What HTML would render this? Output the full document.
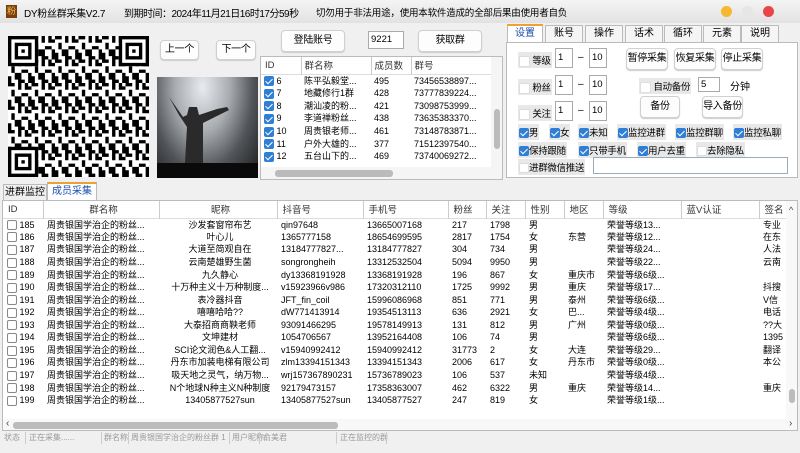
<!DOCTYPE html>
<html><head><meta charset="utf-8"><style>
*{box-sizing:border-box;margin:0;padding:0}
body{width:800px;height:453px;overflow:hidden;background:#f0f0f0;font-family:"Liberation Sans","Noto Sans CJK SC",sans-serif;font-size:11px;color:#000;position:relative}
.abs{position:absolute;white-space:nowrap}
.btn{position:absolute;background:#fdfdfd;border:1px solid #d0d0d0;border-radius:4px;text-align:center;font-size:10px;white-space:nowrap;letter-spacing:-0.3px;box-shadow:0 1px 1px #ccc}
.inp{position:absolute;background:#fff;border:1px solid #aaa;font-size:9.5px;padding-left:2px}
.cb{display:inline-block;width:10px;height:10px;border:1px solid #888;border-radius:2px;background:#fff;vertical-align:middle}
.ck{display:inline-block;width:10px;height:10px;border-radius:2px;background:#2f7fd6;vertical-align:middle;position:relative}
.ck:after{content:"";position:absolute;left:3px;top:1px;width:3px;height:6px;border:solid #fff;border-width:0 1.5px 1.5px 0;transform:rotate(45deg)}
.lbl{position:absolute;font-size:9.5px;background:#e8e8e8;padding:1px 1px;white-space:nowrap;letter-spacing:-0.3px}
table{border-collapse:collapse;table-layout:fixed}
td,th{white-space:nowrap;overflow:hidden;font-weight:normal;text-align:left}
#mt td{height:12.57px;font-size:9px;line-height:12px;padding-left:4px}
#mt th{height:17px;font-size:9.5px;color:#333;border-left:1px solid #ccc;padding-left:5px}
#gt td{height:12.7px;font-size:9px;line-height:12px;padding-left:3px}
.tab{position:absolute;top:25px;height:17px;border:1px solid #bbb;border-bottom:none;background:#f5f5f5;text-align:center;font-size:10px;line-height:16px}
</style></head><body>
<div class="abs" style="left:0;top:0;width:800px;height:23px;background:linear-gradient(#f4f4f4,#e2e2e2)"></div>
<div class="abs" style="left:6px;top:5px;width:11px;height:13px;background:#7a3d10;color:#f4c04a;font-size:9px;text-align:center;line-height:13px">粉</div>
<div class="abs" style="left:24px;top:5px;font-size:10px;letter-spacing:-0.3px">DY粉丝群采集V2.7</div>
<div class="abs" style="left:124px;top:5px;font-size:10px;letter-spacing:-0.5px">到期时间：2024年11月21日16时17分59秒</div>
<div class="abs" style="left:316px;top:5px;font-size:9.5px;letter-spacing:-0.2px">切勿用于非法用途，使用本软件造成的全部后果由使用者自负</div>
<div class="abs" style="left:721px;top:6px;width:11px;height:11px;border-radius:50%;background:#f7b731"></div>
<div class="abs" style="left:742px;top:6px;width:11px;height:11px;border-radius:50%;background:#e6e6e6"></div>
<div class="abs" style="left:763px;top:6px;width:11px;height:11px;border-radius:50%;background:#e8454a"></div>

<svg class="abs" style="left:8px;top:36px" width="141" height="141" viewBox="0 0 42 42">
<defs><pattern id="q" width="7" height="7" patternUnits="userSpaceOnUse">
<rect width="7" height="7" fill="#fff"/>
<path d="M0 0h2v1H0zM3 0h1v2H3zM5 1h2v1H5zM1 2h1v2H1zM4 3h2v1H4zM0 5h1v2H0zM2 4h2v2H2zM6 4h1v3H6zM3 6h2v1H3zM5 0h1v1H5z" fill="#000"/></pattern></defs>
<rect width="42" height="42" fill="url(#q)"/>
<g fill="#000"><rect x="0" y="0" width="9" height="9"/><rect x="33" y="0" width="9" height="9"/><rect x="0" y="33" width="9" height="9"/></g>
<g fill="#fff"><rect x="1" y="1" width="7" height="7"/><rect x="34" y="1" width="7" height="7"/><rect x="1" y="34" width="7" height="7"/></g>
<g fill="#000"><rect x="2" y="2" width="5" height="5"/><rect x="35" y="2" width="5" height="5"/><rect x="2" y="35" width="5" height="5"/></g>
<g fill="#fff"><rect x="3" y="3" width="3" height="3"/><rect x="36" y="3" width="3" height="3"/><rect x="3" y="36" width="3" height="3"/></g>
<g fill="#000"><rect x="4" y="4" width="1" height="1"/><rect x="37" y="4" width="1" height="1"/><rect x="4" y="37" width="1" height="1"/></g>
</svg>
<div class="btn" style="left:160px;top:40px;width:39px;height:20px;line-height:18px">上一个</div>
<div class="btn" style="left:216px;top:40px;width:40px;height:20px;line-height:18px">下一个</div>
<div class="abs" style="left:157px;top:77px;width:101px;height:101px;background:radial-gradient(ellipse at 45% 10%,#e8ecf0 0%,#a8acb0 35%,#505458 65%,#1a1a1a 100%)"></div>
<div class="abs" style="left:157px;top:163px;width:101px;height:15px;background:#0a0a0a"></div>
<svg class="abs" style="left:157px;top:77px" width="101" height="101"><path d="M12 20 L26 40 L30 38 L32 30 L40 30 L42 38 L60 32 L70 30 L72 33 L58 40 L46 46 L46 86 L28 86 L30 50 L22 38 Z" fill="#2a2a2a"/></svg>

<div class="btn" style="left:281px;top:30px;width:64px;height:22px;line-height:20px">登陆账号</div>
<div class="inp" style="left:368px;top:31px;width:36px;height:18px;line-height:16px">9221</div>
<div class="btn" style="left:418px;top:30px;width:64px;height:22px;line-height:20px">获取群</div>

<div class="abs" style="left:260px;top:56px;width:243px;height:124px;background:#fff;border:1px solid #bbb;overflow:hidden">
<table id="gt" style="width:230px">
<colgroup><col style="width:40px"><col style="width:70px"><col style="width:40px"><col style="width:80px"></colgroup>
<tr style="height:17px;font-size:9.5px;color:#333;border-bottom:1px solid #ddd"><th style="padding-left:4px">ID</th><th style="border-left:1px solid #ccc;padding-left:3px">群名称</th><th style="border-left:1px solid #ccc;padding-left:3px">成员数</th><th style="border-left:1px solid #ccc;padding-left:3px">群号</th></tr>
<tr><td><span class="ck"></span> 6</td><td>陈平弘毅堂...</td><td>495</td><td>73456538897...</td></tr>
<tr><td><span class="ck"></span> 7</td><td>地藏修行1群</td><td>428</td><td>73777839224...</td></tr>
<tr><td><span class="ck"></span> 8</td><td>潮汕凌的粉...</td><td>421</td><td>73098753999...</td></tr>
<tr><td><span class="ck"></span> 9</td><td>李道禅粉丝...</td><td>438</td><td>73635383370...</td></tr>
<tr><td><span class="ck"></span> 10</td><td>周贵银老师...</td><td>461</td><td>73148783871...</td></tr>
<tr><td><span class="ck"></span> 11</td><td>户外大雄的...</td><td>377</td><td>71512397540...</td></tr>
<tr><td><span class="ck"></span> 12</td><td>五台山下的...</td><td>469</td><td>73740069272...</td></tr>
</table>
<div class="abs" style="left:230px;top:0;width:12px;height:110px;background:#f5f5f5"></div>
<div class="abs" style="left:233px;top:52px;width:6px;height:40px;background:#bbb;border-radius:3px"></div>
<div class="abs" style="left:0;top:110px;width:242px;height:13px;background:#f5f5f5"></div>
<div class="abs" style="left:14px;top:113px;width:118px;height:7px;background:#bbb;border-radius:3px"></div>
</div>

<div class="tab" style="left:507px;width:36px;background:#fff;color:#1a4fb0;border-top:2px solid #f0a030;top:24px;height:19px">设置</div>
<div class="tab" style="left:545px;width:38px">账号</div>
<div class="tab" style="left:585px;width:38px">操作</div>
<div class="tab" style="left:625px;width:38px">话术</div>
<div class="tab" style="left:664px;width:38px">循环</div>
<div class="tab" style="left:703px;width:38px">元素</div>
<div class="tab" style="left:741px;width:38px">说明</div>
<div class="abs" style="left:506px;top:42px;width:292px;height:136px;background:#fff;border:1px solid #bbb"></div>
<div class="lbl" style="left:518px;top:52px"><span class="cb" style="width:11px;height:11px;border-color:#ddd"></span> 等级</div>
<div class="inp" style="left:555px;top:48px;width:18px;height:20px;line-height:18px">1</div><div class="abs" style="left:578px;top:52px;font-size:10px">–</div>
<div class="inp" style="left:589px;top:48px;width:18px;height:20px;line-height:18px">10</div>
<div class="lbl" style="left:518px;top:79px"><span class="cb" style="width:11px;height:11px;border-color:#ddd"></span> 粉丝</div>
<div class="inp" style="left:555px;top:75px;width:18px;height:20px;line-height:18px">1</div><div class="abs" style="left:578px;top:79px;font-size:10px">–</div>
<div class="inp" style="left:589px;top:75px;width:18px;height:20px;line-height:18px">10</div>
<div class="lbl" style="left:518px;top:105px"><span class="cb" style="width:11px;height:11px;border-color:#ddd"></span> 关注</div>
<div class="inp" style="left:555px;top:101px;width:18px;height:20px;line-height:18px">1</div><div class="abs" style="left:578px;top:105px;font-size:10px">–</div>
<div class="inp" style="left:589px;top:101px;width:18px;height:20px;line-height:18px">10</div>
<div class="btn" style="left:626px;top:48px;width:42px;height:22px;line-height:20px">暂停采集</div>
<div class="btn" style="left:674px;top:48px;width:42px;height:22px;line-height:20px">恢复采集</div>
<div class="btn" style="left:721px;top:48px;width:42px;height:22px;line-height:20px">停止采集</div>
<div class="lbl" style="left:639px;top:78px"><span class="cb" style="width:11px;height:11px;border-color:#ddd"></span> 自动备份</div>
<div class="inp" style="left:698px;top:77px;width:22px;height:15px;line-height:13px">5</div>
<div class="abs" style="left:730px;top:78px;font-size:10px">分钟</div>
<div class="btn" style="left:640px;top:96px;width:40px;height:22px;line-height:20px">备份</div>
<div class="btn" style="left:702px;top:96px;width:41px;height:22px;line-height:20px">导入备份</div>
<div class="lbl" style="left:518px;top:124px"><span class="ck"></span>男</div>
<div class="lbl" style="left:549px;top:124px"><span class="ck"></span>女</div>
<div class="lbl" style="left:578px;top:124px"><span class="ck"></span>未知</div>
<div class="lbl" style="left:617px;top:124px"><span class="ck"></span>监控进群</div>
<div class="lbl" style="left:675px;top:124px"><span class="ck"></span>监控群聊</div>
<div class="lbl" style="left:733px;top:124px"><span class="ck"></span>监控私聊</div>
<div class="lbl" style="left:518px;top:142px"><span class="ck"></span>保持跟随</div>
<div class="lbl" style="left:578px;top:142px"><span class="ck"></span>只带手机</div>
<div class="lbl" style="left:637px;top:142px"><span class="ck"></span>用户去重</div>
<div class="lbl" style="left:696px;top:142px"><span class="cb" style="border-color:#ddd"></span>去除隐私</div>
<div class="lbl" style="left:518px;top:159px"><span class="cb" style="border-color:#ddd"></span>进群微信推送</div>
<div class="inp" style="left:593px;top:157px;width:195px;height:17px;border-color:#9ab"></div>

<div class="abs" style="left:3px;top:184px;width:44px;height:16px;border:1px solid #bbb;border-bottom:none;font-size:10px;text-align:center;line-height:15px">进群监控</div>
<div class="abs" style="left:47px;top:182px;width:50px;height:18px;border:1px solid #bbb;border-top:2px solid #f0a030;border-bottom:none;background:#fff;color:#1a4fb0;font-size:10px;text-align:center;line-height:15px">成员采集</div>

<div class="abs" style="left:2px;top:200px;width:796px;height:231px;background:#fff;border:1px solid #bbb;overflow:hidden">
<table id="mt" style="width:784px">
<colgroup><col style="width:40px"><col style="width:116px"><col style="width:118px"><col style="width:86px"><col style="width:85px"><col style="width:38px"><col style="width:39px"><col style="width:39px"><col style="width:39px"><col style="width:78px"><col style="width:78px"><col style="width:28px"></colgroup>
<tr style="border-bottom:1px solid #ddd"><th style="border:none">ID</th><th style="text-align:center">群名称</th><th style="text-align:center">昵称</th><th>抖音号</th><th>手机号</th><th>粉丝</th><th>关注</th><th>性别</th><th>地区</th><th>等级</th><th>蓝V认证</th><th>签名</th></tr>
<tr><td><span class="cb"></span> 185</td><td>周贵银国学治企的粉丝...</td><td style="text-align:center">沙发套窗帘布艺</td><td>qin97648</td><td>13665007168</td><td>217</td><td>1798</td><td>男</td><td></td><td>荣誉等级13...</td><td></td><td>专业</td></tr>
<tr><td><span class="cb"></span> 186</td><td>周贵银国学治企的粉丝...</td><td style="text-align:center">叶心儿</td><td>1365777158</td><td>18654699595</td><td>2817</td><td>1754</td><td>女</td><td>东营</td><td>荣誉等级12...</td><td></td><td>在东</td></tr>
<tr><td><span class="cb"></span> 187</td><td>周贵银国学治企的粉丝...</td><td style="text-align:center">大道至简观自在</td><td>13184777827...</td><td>13184777827</td><td>304</td><td>734</td><td>男</td><td></td><td>荣誉等级24...</td><td></td><td>人法</td></tr>
<tr><td><span class="cb"></span> 188</td><td>周贵银国学治企的粉丝...</td><td style="text-align:center">云南楚雄野生菌</td><td>songrongheih</td><td>13312532504</td><td>5094</td><td>9950</td><td>男</td><td></td><td>荣誉等级22...</td><td></td><td>云南</td></tr>
<tr><td><span class="cb"></span> 189</td><td>周贵银国学治企的粉丝...</td><td style="text-align:center">九久静心</td><td>dy13368191928</td><td>13368191928</td><td>196</td><td>867</td><td>女</td><td>重庆市</td><td>荣誉等级6级...</td><td></td><td></td></tr>
<tr><td><span class="cb"></span> 190</td><td>周贵银国学治企的粉丝...</td><td style="text-align:center">十万种主义十万种制度...</td><td>v15923966v986</td><td>17320312110</td><td>1725</td><td>9992</td><td>男</td><td>重庆</td><td>荣誉等级17...</td><td></td><td>抖搜</td></tr>
<tr><td><span class="cb"></span> 191</td><td>周贵银国学治企的粉丝...</td><td style="text-align:center">表冷器抖音</td><td>JFT_fin_coil</td><td>15996086968</td><td>851</td><td>771</td><td>男</td><td>泰州</td><td>荣誉等级6级...</td><td></td><td>V信</td></tr>
<tr><td><span class="cb"></span> 192</td><td>周贵银国学治企的粉丝...</td><td style="text-align:center">嘻嘻哈哈??</td><td>dW771413914</td><td>19354513113</td><td>636</td><td>2921</td><td>女</td><td>巴...</td><td>荣誉等级4级...</td><td></td><td>电话</td></tr>
<tr><td><span class="cb"></span> 193</td><td>周贵银国学治企的粉丝...</td><td style="text-align:center">大泰招商商鞅老师</td><td>93091466295</td><td>19578149913</td><td>131</td><td>812</td><td>男</td><td>广州</td><td>荣誉等级0级...</td><td></td><td>??大</td></tr>
<tr><td><span class="cb"></span> 194</td><td>周贵银国学治企的粉丝...</td><td style="text-align:center">文坤建材</td><td>1054706567</td><td>13952164408</td><td>106</td><td>74</td><td>男</td><td></td><td>荣誉等级6级...</td><td></td><td>1395</td></tr>
<tr><td><span class="cb"></span> 195</td><td>周贵银国学治企的粉丝...</td><td style="text-align:center">SCI论文润色&amp;人工翻...</td><td>v15940992412</td><td>15940992412</td><td>31773</td><td>2</td><td>女</td><td>大连</td><td>荣誉等级29...</td><td></td><td>翻译</td></tr>
<tr><td><span class="cb"></span> 196</td><td>周贵银国学治企的粉丝...</td><td style="text-align:center">丹东市加装电梯有限公司</td><td>zlm13394151343</td><td>13394151343</td><td>2006</td><td>617</td><td>女</td><td>丹东市</td><td>荣誉等级0级...</td><td></td><td>本公</td></tr>
<tr><td><span class="cb"></span> 197</td><td>周贵银国学治企的粉丝...</td><td style="text-align:center">吸天地之灵气，纳万物...</td><td>wrj157367890231</td><td>15736789023</td><td>106</td><td>537</td><td>未知</td><td></td><td>荣誉等级4级...</td><td></td><td></td></tr>
<tr><td><span class="cb"></span> 198</td><td>周贵银国学治企的粉丝...</td><td style="text-align:center">N个地球N种主义N种制度</td><td>92179473157</td><td>17358363007</td><td>462</td><td>6322</td><td>男</td><td>重庆</td><td>荣誉等级14...</td><td></td><td>重庆</td></tr>
<tr><td><span class="cb"></span> 199</td><td>周贵银国学治企的粉丝...</td><td style="text-align:center">13405877527sun</td><td>13405877527sun</td><td>13405877527</td><td>247</td><td>819</td><td>女</td><td></td><td>荣誉等级1级...</td><td></td><td></td></tr>
</table>
<div class="abs" style="left:783px;top:0;width:12px;height:218px;background:#f8f8f8"></div>
<div class="abs" style="left:786px;top:4px;font-size:9px;color:#444">^</div>
<div class="abs" style="left:786px;top:188px;width:6px;height:14px;background:#bbb;border-radius:3px"></div>
<div class="abs" style="left:0;top:218px;width:795px;height:12px;background:#f8f8f8"></div>
<div class="abs" style="left:3px;top:217px;font-size:10px;color:#444">‹</div>
<div class="abs" style="left:10px;top:221px;width:325px;height:7px;background:#bbb;border-radius:3px"></div>
<div class="abs" style="left:786px;top:217px;font-size:10px;color:#444">›</div>
</div>

<div class="abs" style="left:0;top:432px;width:800px;height:21px;font-size:8px;color:#999;line-height:12px">
<span class="abs" style="left:4px;top:0">状态</span>
<span class="abs" style="left:25px;top:0;height:12px;border-left:1px solid #ccc"></span>
<span class="abs" style="left:29px;top:0">正在采集......</span>
<span class="abs" style="left:101px;top:0;height:12px;border-left:1px solid #ccc"></span>
<span class="abs" style="left:104px;top:0">群名称</span>
<span class="abs" style="left:128px;top:0;height:12px;border-left:1px solid #ccc"></span>
<span class="abs" style="left:131px;top:0">周贵银国学治企的粉丝群 1</span>
<span class="abs" style="left:229px;top:0;height:12px;border-left:1px solid #ccc"></span>
<span class="abs" style="left:232px;top:0">用户昵称</span>
<span class="abs" style="left:259px;top:0;height:12px;border-left:1px solid #ccc"></span>
<span class="abs" style="left:263px;top:0">俞美君</span>
<span class="abs" style="left:336px;top:0;height:12px;border-left:1px solid #ccc"></span>
<span class="abs" style="left:340px;top:0">正在监控的群</span>
<span class="abs" style="left:386px;top:0;height:12px;border-left:1px solid #ccc"></span>
</div>
</body></html>
